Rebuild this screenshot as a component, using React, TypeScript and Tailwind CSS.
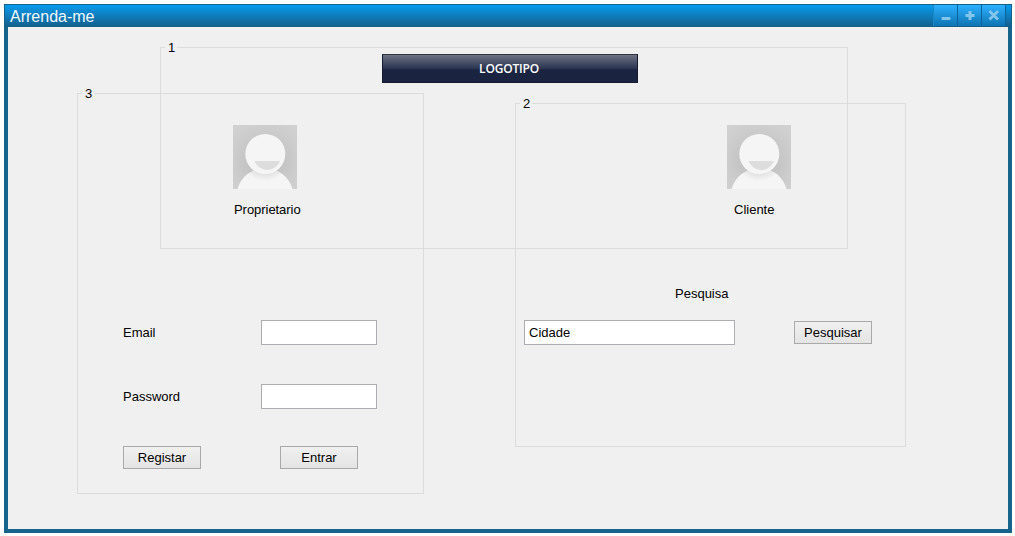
import type { ReactNode } from "react";

function WindowButton({ label, children }: { label: string; children: ReactNode }) {
  return (
    <button
      aria-label={label}
      className="flex h-[21px] w-6 items-center justify-center border-r border-r-[#0b619b] bg-linear-to-b from-[#2db0ff] to-[#0d74b2]"
    >
      <svg width="23" height="21" viewBox="0 0 23 21">
        {children}
      </svg>
    </button>
  );
}

function GroupBox({ title, className, children }: { title: string; className: string; children: ReactNode }) {
  return (
    <section className={`col-start-1 row-start-1 flex flex-col ${className}`}>
      <div className="flex h-px items-center">
        <span className="h-px w-[5px] bg-[#dcdcdc]" />
        <span className="w-3 pl-[3px] leading-[15px]">{title}</span>
        <span className="h-px flex-1 bg-[#dcdcdc]" />
      </div>
      <div className="flex-1 border border-t-0 border-[#dcdcdc]">{children}</div>
    </section>
  );
}

function Avatar({ id }: { id: string }) {
  return (
    <svg width="64" height="64" viewBox="0 0 64 64" className="block">
      <defs>
        <radialGradient id={`${id}-bg`} cx="32" cy="36" r="45" gradientUnits="userSpaceOnUse">
          <stop offset="0.4" stopColor="#c4c4c4" />
          <stop offset="0.7" stopColor="#cccccc" />
          <stop offset="1" stopColor="#d1d1d1" />
        </radialGradient>
        <radialGradient id={`${id}-shade`} cx="32" cy="31" r="28" gradientUnits="userSpaceOnUse">
          <stop offset="0.64" stopColor="#e2e2e2" />
          <stop offset="0.9" stopColor="#f5f5f5" />
        </radialGradient>
      </defs>
      <rect width="64" height="64" fill={`url(#${id}-bg)`} />
      <path d="M4.500 64C8 52.500 17 43.500 32 43.500S56 52.500 59.500 64Z" fill={`url(#${id}-shade)`} />
      <circle cx="32.300" cy="29" r="20" fill="#f5f5f5" />
      <path d="M21.500 36H47C44.500 41.500 40 45 34.300 45S24 41.500 21.500 36Z" fill="#dddddd" />
    </svg>
  );
}

function PushButton({ children }: { children: ReactNode }) {
  return (
    <button className="h-[23px] w-[78px] border border-[#a9a9a9] bg-linear-to-b from-[#f0f0f0] to-[#e4e4e4] leading-[15px]">
      {children}
    </button>
  );
}

export default function App() {
  return (
    <div className="h-[536px] w-[1015px] overflow-hidden bg-white pt-1 pl-1 font-['Liberation_Sans',sans-serif] text-[13px] text-black">
      <div className="flex h-[529px] w-[1008px] flex-col bg-[#16638c]">
        <header className="flex h-[23px] shrink-0 items-start border border-[#15618a] bg-linear-to-b from-[#049bed] to-[#12618f] pl-[5px]">
          <h1 className="flex-1 text-[16px] leading-[23px] text-[#f0f8fc]">Arrenda-me</h1>
          <div className="flex border-l border-l-[#1688c8] pr-[5px]">
            <WindowButton label="Minimizar">
              <rect x="7.500" y="12" width="9" height="3" rx="1" fill="#83c6eb" />
            </WindowButton>
            <WindowButton label="Maximizar">
              <path d="M12 6V15M7.500 10.500H16.500" stroke="#83c6eb" strokeWidth="3" />
            </WindowButton>
            <WindowButton label="Fechar">
              <path d="M7.500 6L16 14.500M16 6L7.500 14.500" stroke="#83c6eb" strokeWidth="2.800" />
            </WindowButton>
          </div>
        </header>
        <main className="mx-1 mb-1 grid flex-1 items-start justify-items-start bg-[#f0f0f0]">
          <GroupBox title="1" className="mt-5 ml-[152px] h-[202px] w-[688px]">
            <div className="mt-1.5 ml-[221px] flex h-[29px] w-64 items-center justify-center border border-[#151b31] border-t-[#30343e] bg-linear-to-b from-[#6e7385] from-0% via-[#2b3550] via-50% to-[#1a2440] to-55% pr-0.5 font-['Open_Sans',sans-serif] text-[12px] font-semibold tracking-[-0.2px] text-white">
              LOGOTIPO
            </div>
          </GroupBox>
          <GroupBox title="3" className="mt-[66px] ml-[69px] h-[401px] w-[347px]">
            <div className="flex flex-col items-start pt-[31px] pl-[155px]">
              <Avatar id="owner" />
              <span className="mt-[13px] ml-px leading-[15px] tracking-[-0.05px]">Proprietario</span>
            </div>
            <div className="mt-[103px] ml-[45px] grid w-[254px] grid-cols-[138px_116px] items-center gap-y-[39px]">
              <label htmlFor="email">Email</label>
              <input id="email" className="h-[25px] w-full border border-[#abadb3] bg-white px-1" />
              <label htmlFor="password">Password</label>
              <input id="password" type="password" className="h-[25px] w-full border border-[#abadb3] bg-white px-1" />
            </div>
            <div className="mt-[37px] ml-[45px] flex gap-[79px]">
              <PushButton>Registar</PushButton>
              <PushButton>Entrar</PushButton>
            </div>
          </GroupBox>
          <GroupBox title="2" className="mt-[76px] ml-[507px] h-[344px] w-[391px]">
            <div className="flex flex-col items-start pt-[21px] pl-[211px]">
              <Avatar id="client" />
              <span className="mt-[13px] ml-[7px] leading-[15px]">Cliente</span>
            </div>
            <h2 className="mt-[69px] ml-[159px] leading-[15px]">Pesquisa</h2>
            <div className="mt-[19px] ml-2 flex items-center gap-[59px]">
              <input defaultValue="Cidade" aria-label="Cidade" className="h-[25px] w-[211px] border border-[#abadb3] bg-white px-1" />
              <PushButton>Pesquisar</PushButton>
            </div>
          </GroupBox>
        </main>
      </div>
    </div>
  );
}
